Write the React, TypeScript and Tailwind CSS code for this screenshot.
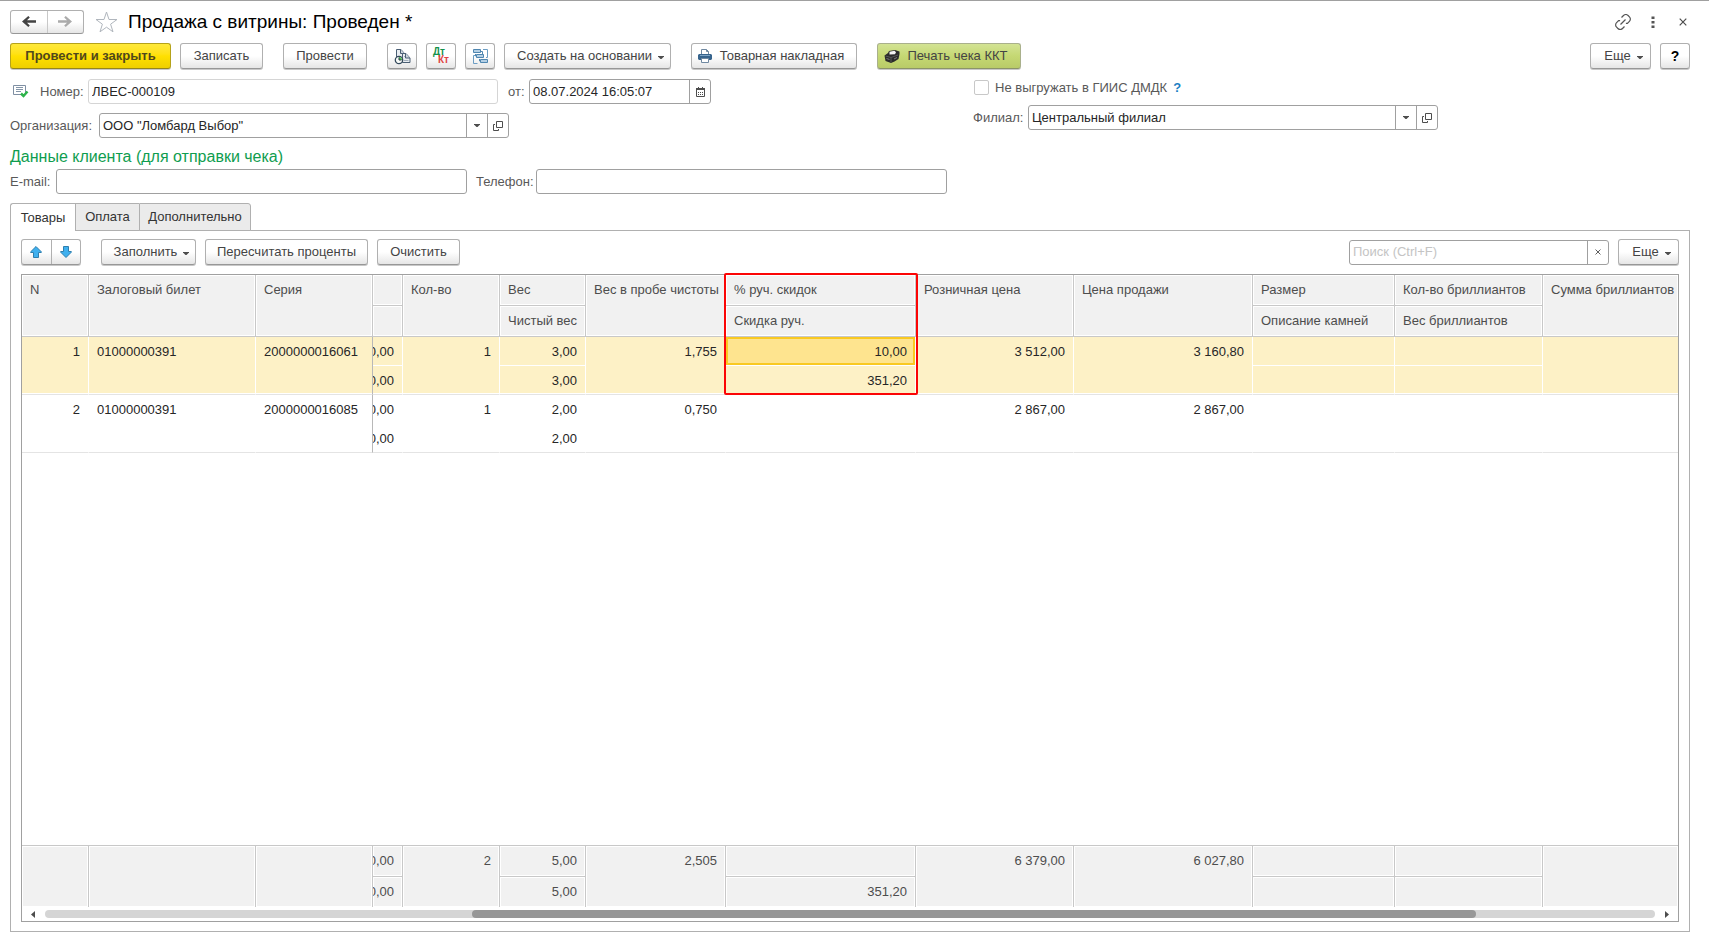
import React from "react";

type ButtonProps = React.ButtonHTMLAttributes<HTMLButtonElement> & { tone?: "plain" | "yellow" | "green" };

const tones = {
  plain: "border-[#b0b0b0] border-b-[#979797] bg-linear-to-b from-white from-50% to-[#e6e6e6] text-[#444444]",
  yellow: "border-[#b5a21a] border-b-[#94851c] bg-linear-to-b from-[#ffe93a] via-[#ffe000] to-[#eecf00] font-bold text-[#50481c]",
  green: "border-[#a9b08c] border-b-[#8b9468] bg-linear-to-b from-[#d3e394] via-[#c5d873] to-[#b9cb68] text-[#444444]",
};

function Button({ tone = "plain", className = "", children, ...rest }: ButtonProps) {
  return (
    <button
      type="button"
      className={`flex h-[26px] shrink-0 items-center justify-center rounded-[3px] border whitespace-nowrap shadow-[0_1px_0_#c8c8c8] ${tones[tone]} ${className}`}
      {...rest}
    >
      {children}
    </button>
  );
}

const Caret = () => (
  <svg width="6" height="3" viewBox="0 0 6 3" className="mt-0.5 shrink-0" aria-hidden="true">
    <path d="M0 0h6v.5L3.500 3h-1L0 .5z" fill="#4d4d4d" />
  </svg>
);

const OpenIcon = () => (
  <svg width="10" height="10" viewBox="0 0 10 10" fill="none" stroke="#4d4d4d" aria-hidden="true">
    <path d="M3.500.5h6v6h-6zM2 3.500H.5v6h5V8" />
  </svg>
);

function NavArrow({ color, flip }: { color: string; flip?: boolean }) {
  return (
    <svg width="14" height="11" viewBox="0 0 14 11" aria-hidden="true">
      <path
        d={flip ? "M0 4.300h9L6.200 1.500 7.700 0 14 5.500 7.700 11 6.200 9.500 9 6.700H0z" : "M14 4.300H5l2.800-2.800L6.300 0 0 5.500 6.300 11l1.500-1.500L5 6.700h9z"}
        fill={color}
      />
    </svg>
  );
}

function MoveArrow({ down }: { down?: boolean }) {
  return (
    <svg width="12" height="12" viewBox="0 0 12 12" aria-hidden="true">
      <path
        d={down ? "M6 11.500.700 6.200V5.500H3.500v-5h5v5h2.800v.7z" : "M6 .5.700 5.800v.7H3.500v5h5v-5h2.800v-.7z"}
        fill="#3fb0ef"
        stroke="#2f7fae"
      />
    </svg>
  );
}

const ReportIcon = () => (
  <svg width="17" height="17" viewBox="0 0 17 17" aria-hidden="true">
    <path d="M2.500 9V1.500H7l3.500 4V12h-8z" fill="#e9edf1" stroke="#4b5f74" />
    <path d="M6.500 1.500V5.500h4" fill="#cdd6de" stroke="#4b5f74" />
    <path d="M8.500 14.500V5.500h3.500l4 4.500v4.500z" fill="#e9edf1" stroke="#4b5f74" />
    <path d="M11.500 5.500V10H16" fill="#cdd6de" stroke="#4b5f74" />
    <path d="M10 8.500h1M10 12.500h4.500" stroke="#a3b0bc" />
    <circle cx="5" cy="12" r="3.700" fill="#f7faf7" stroke="#34495c" strokeWidth="1.300" />
    <path d="M5 12V9a3 3 0 0 1 3 3z" fill="#55c455" />
    <path d="M5 9.500V12h2.500" fill="none" stroke="#2b3b49" />
  </svg>
);

const StructureIcon = () => (
  <svg width="15" height="15" viewBox="0 0 15 15" aria-hidden="true">
    <path d="M10 .5h4.500v8H13M4.500 14.500h-4v-8H2" fill="none" stroke="#6c9dc3" />
    <path d="M2.500 5v2h2M6.500 10v2h1M7.500 2.500h2v3" fill="none" stroke="#4f86b0" />
    <path d="M.5.5h7v3h-7zM3.500 5.500h7v3h-7zM7.500 10.500h7v3h-7z" fill="#b4cfe4" stroke="#4f86b0" />
  </svg>
);

const PrinterIcon = () => (
  <svg width="14" height="14" viewBox="0 0 14 14" aria-hidden="true">
    <path d="M3.500 6V.5h5l2 2V6" fill="#fff" stroke="#7089a1" />
    <path d="M8.500.5v2h2" fill="none" stroke="#7089a1" />
    <path d="M1 5h12l1 1v4l-1 1H1l-1-1V6z" fill="#37648d" />
    <path d="M2 6.500h10" stroke="#7ba3c5" />
    <path d="M3.500 9.500h7v4h-7z" fill="#fff" stroke="#7089a1" />
  </svg>
);

const CashRegisterIcon = () => (
  <svg width="16" height="13" viewBox="0 0 16 13" aria-hidden="true">
    <path d="M.5 5.500 4 3l1-2 6-1 4.500 1.500V4l-1 5-4 2.500L7 13l-5.500-2z" fill="#2b2b2b" />
    <path d="m5.500 1.800 5-1 1.500 1.500-1 2-5.500.2z" fill="#f4f4f4" />
    <path d="M1.500 6 7 7.500l7-2.500M7 7.500V12" fill="none" stroke="#575757" />
    <path d="m2.500 8.500 3 1M10 9l3-1.500" stroke="#7a7a7a" />
  </svg>
);

const PostedIcon = () => (
  <svg width="16" height="13" viewBox="0 0 16 13" aria-hidden="true">
    <path d="M.5.5h12v9H.5z" fill="#fff" stroke="#7f8fa3" />
    <path d="M3 2.500h7M3 4.500h7M3 6.500h5" stroke="#8495a8" />
    <path d="m8 8.500 2.500 2.500L14.500 6.500" fill="none" stroke="#2db34a" strokeWidth="2.500" />
  </svg>
);

const CalendarIcon = () => (
  <svg width="9" height="10" viewBox="0 0 9 10" aria-hidden="true">
    <path d="M.5 1.500h8v8h-8z" fill="#fff" stroke="#4d4d4d" />
    <path d="M0 1h9v2H0zM2 0h1v1H2zM6 0h1v1H6z" fill="#4d4d4d" />
    <path d="M2 5.500h1m1 0h1m1 0h1M2 7.500h1m1 0h1m1 0h1" stroke="#4d4d4d" />
  </svg>
);

const Cross = ({ size }: { size: number }) => (
  <svg width={size} height={size} viewBox="0 0 8 8" stroke="#4d4d4d" strokeWidth="1.200" aria-hidden="true">
    <path d="m.7.7 6.600 6.600M7.300.7.7 7.300" />
  </svg>
);

const fieldBox = "flex h-[25px] items-stretch overflow-hidden rounded-[3px] border bg-white";
const fieldInput = "min-w-0 flex-1 bg-transparent px-[3px] text-[#262626] outline-none placeholder:text-[#c4c4c4]";
const fieldButton = "flex w-[21px] shrink-0 items-center justify-center border-l border-[#a0a0a0]";

function ReferenceField({ id, value, name }: { id: string; value: string; name: string }) {
  return (
    <div className={`${fieldBox} w-[410px] border-[#a0a0a0]`}>
      <input id={id} className={fieldInput} defaultValue={value} />
      <button type="button" className={fieldButton} aria-label={`Выбрать: ${name}`}>
        <svg width="6" height="3" viewBox="0 0 6 3" aria-hidden="true">
          <path d="M0 0h6v.5L3.500 3h-1L0 .5z" fill="#4d4d4d" />
        </svg>
      </button>
      <button type="button" className={fieldButton} aria-label={`Открыть: ${name}`}>
        <OpenIcon />
      </button>
    </div>
  );
}

type Column = { top: string; bottom?: string; split?: boolean; align?: "right" };

const columns: Column[] = [
  { top: "N", align: "right" },
  { top: "Залоговый билет" },
  { top: "Серия" },
  { top: "", split: true, align: "right" },
  { top: "Кол-во", align: "right" },
  { top: "Вес", bottom: "Чистый вес", split: true, align: "right" },
  { top: "Вес в пробе чистоты", align: "right" },
  { top: "% руч. скидок", bottom: "Скидка руч.", split: true, align: "right" },
  { top: "Розничная цена", align: "right" },
  { top: "Цена продажи", align: "right" },
  { top: "Размер", bottom: "Описание камней", split: true },
  { top: "Кол-во бриллиантов", bottom: "Вес бриллиантов", split: true },
  { top: "Сумма бриллиантов", align: "right" },
];

const rows = [
  {
    selected: true,
    top: ["1", "01000000391", "2000000016061", "0,00", "1", "3,00", "1,755", "10,00", "3 512,00", "3 160,80", "", "", ""],
    bottom: ["", "", "", "0,00", "", "3,00", "", "351,20", "", "", "", "", ""],
  },
  {
    selected: false,
    top: ["2", "01000000391", "2000000016085", "0,00", "1", "2,00", "0,750", "", "2 867,00", "2 867,00", "", "", ""],
    bottom: ["", "", "", "0,00", "", "2,00", "", "", "", "", "", "", ""],
  },
];

const totals = {
  top: ["", "", "", "0,00", "2", "5,00", "2,505", "", "6 379,00", "6 027,80", "", "", ""],
  bottom: ["", "", "", "0,00", "", "5,00", "", "351,20", "", "", "", "", ""],
};

const FROZEN = 2;
const DISCOUNT = 7;

function Value({ text, align, narrow }: { text: string; align?: "right"; narrow?: boolean }) {
  return (
    <div
      className={`flex h-7 items-center overflow-hidden pt-0.5 pr-2 whitespace-nowrap ${align === "right" ? "justify-end" : ""} ${narrow ? "" : "pl-2"}`}
    >
      <span className="shrink-0">{text}</span>
    </div>
  );
}

const headFill = "bg-[#f1f1f1] shadow-[inset_0_0_0_1px_#ffffff]";

function headerCell(c: Column, i: number, part: "top" | "bottom") {
  const last = i === columns.length - 1;
  return (
    <th
      key={i}
      scope="col"
      rowSpan={c.split ? 1 : 2}
      className={`border-b border-[#c8c8c8] p-0 align-top font-normal ${headFill} ${last ? "" : "border-r"}`}
    >
      <Value text={(part === "top" ? c.top : c.bottom) ?? ""} />
    </th>
  );
}

function bodyCell(row: (typeof rows)[number], i: number, part: "top" | "bottom") {
  const c = columns[i];
  const closing = part === "bottom" || !c.split;
  const focused = row.selected && part === "top" && i === DISCOUNT;
  const bottom = closing ? "border-b border-b-[#e4e4e4]" : "border-b border-b-white";
  const right = i === columns.length - 1 ? "" : i === FROZEN ? "border-r border-r-[#b8b8b8]" : "border-r border-r-white";
  const fill = focused
    ? "bg-[#fee48f] shadow-[inset_0_0_0_2px_#f9c922]"
    : row.selected
      ? closing
        ? "bg-[#fdf1c6] shadow-[inset_0_-1px_0_#ffffff]"
        : "bg-[#fdf1c6]"
      : "";
  return (
    <td key={i} rowSpan={c.split ? 1 : 2} className={`p-0 align-top ${bottom} ${right} ${fill}`}>
      <Value text={row[part][i]} align={c.align} narrow={i === 3} />
    </td>
  );
}

function footCell(i: number, part: "top" | "bottom") {
  const c = columns[i];
  return (
    <td
      key={i}
      rowSpan={c.split ? 1 : 2}
      className={`border-t border-[#c8c8c8] p-0 align-top ${headFill} ${i === columns.length - 1 ? "" : "border-r"}`}
    >
      <Value text={totals[part][i]} align={c.align} narrow={i === 3} />
    </td>
  );
}

function GoodsTable() {
  return (
    <table id="goods" className="h-full w-full table-fixed border-separate border-spacing-0 text-left">
      <colgroup>
        <col className="w-[67px]" />
        <col className="w-[167px]" />
        <col className="w-[117px]" />
        <col className="w-[30px]" />
        <col className="w-[97px]" />
        <col className="w-[86px]" />
        <col className="w-[140px]" />
        <col className="w-[190px]" />
        <col className="w-[158px]" />
        <col className="w-[179px]" />
        <col className="w-[142px]" />
        <col className="w-[148px]" />
        <col />
      </colgroup>
      <thead className="text-[#4d4d4d]">
        <tr className="h-[31px]">{columns.map((c, i) => headerCell(c, i, "top"))}</tr>
        <tr className="h-[31px]">{columns.map((c, i) => (c.split ? headerCell(c, i, "bottom") : null))}</tr>
      </thead>
      <tbody className="text-[#262626]">
        {rows.map((row, r) => (
          <React.Fragment key={r}>
            <tr className="h-[29px]">{columns.map((_, i) => bodyCell(row, i, "top"))}</tr>
            <tr className="h-[29px]">{columns.map((c, i) => (c.split ? bodyCell(row, i, "bottom") : null))}</tr>
          </React.Fragment>
        ))}
        <tr>
          <td colSpan={columns.length} className="p-0" />
        </tr>
      </tbody>
      <tfoot className="text-[#4d4d4d]">
        <tr className="h-[31px]">{columns.map((_, i) => footCell(i, "top"))}</tr>
        <tr className="h-[31px]">{columns.map((c, i) => (c.split ? footCell(i, "bottom") : null))}</tr>
      </tfoot>
    </table>
  );
}

export default function App() {
  return (
    <main className="flex min-h-screen flex-col border-t border-[#a0a0a0] bg-white pt-2 pr-[19px] pb-[7px] pl-[10px] font-['Liberation_Sans',Arial,sans-serif] text-[13px] leading-4 text-[#595959]">
      <header className="flex h-[25px] items-center">
        <div className="flex h-6 w-[74px] overflow-hidden rounded-[3px] border border-[#b0b0b0] border-b-[#979797] bg-linear-to-b from-white from-50% to-[#e6e6e6]">
          <button type="button" aria-label="Назад" className="flex flex-1 items-center justify-center border-r border-[#c8c8c8]">
            <NavArrow color="#444444" />
          </button>
          <button type="button" aria-label="Вперед" className="flex flex-1 items-center justify-center">
            <NavArrow color="#ababab" flip />
          </button>
        </div>
        <button type="button" aria-label="Добавить в избранное" className="ml-[11px]">
          <svg width="23" height="22" viewBox="0 0 23 22" fill="none" stroke="#b0b6bd" aria-hidden="true">
            <path d="m11.500 1 2.500 7.500h8l-6.400 4.700 2.400 7.600-6.500-4.600L5 20.800l2.400-7.600L1 8.500h8z" />
          </svg>
        </button>
        <h1 className="ml-[10px] text-[19px] leading-6 text-black">Продажа с витрины: Проведен *</h1>
        <div className="mr-[3px] ml-auto flex items-center">
          <button type="button" aria-label="Получить ссылку">
            <svg width="16" height="16" viewBox="0 0 16 16" fill="none" stroke="#555555" strokeWidth="1.200" aria-hidden="true">
              <path d="m6.500 3.500 2-2a3.200 3.200 0 0 1 4.600 0l1.300 1.300a3.200 3.200 0 0 1 0 4.600l-2 2h-1.500M9.500 12.500l-2 2a3.200 3.200 0 0 1-4.600 0l-1.300-1.300a3.200 3.200 0 0 1 0-4.600l2-2h1.500M5.500 10.500l5-5" />
            </svg>
          </button>
          <button type="button" aria-label="Дополнительное меню" className="ml-5">
            <svg width="4" height="12" viewBox="0 0 4 12" fill="#555555" aria-hidden="true">
              <path d="M.5.5h3v2.500h-3zM.5 5h3v2.500h-3zM.5 9.500h3V12h-3z" />
            </svg>
          </button>
          <button type="button" aria-label="Закрыть" className="ml-6">
            <Cross size={8} />
          </button>
        </div>
      </header>

      <div className="mt-[9px] flex items-center gap-[9px]">
        <Button tone="yellow" className="w-[161px]">Провести и закрыть</Button>
        <Button className="w-[83px]">Записать</Button>
        <Button className="ml-[11px] w-[84px]">Провести</Button>
        <Button className="ml-[11px] w-[30px]" aria-label="Отчет"><ReportIcon /></Button>
        <Button className="w-[30px]" aria-label="Показать проводки">
          <span className="flex flex-col text-left text-[10px] leading-[8px] font-bold" aria-hidden="true">
            <span className="text-[#14924b]">Дт</span>
            <span className="pl-[5px] text-[#df4545]">Кт</span>
          </span>
        </Button>
        <Button className="w-[30px]" aria-label="Структура подчиненности"><StructureIcon /></Button>
        <Button className="w-[167px] gap-[6px] pl-[6px]">Создать на основании <Caret /></Button>
        <Button className="ml-[11px] w-[166px] gap-2 pr-[6px]"><PrinterIcon />Товарная накладная</Button>
        <Button tone="green" className="ml-[11px] w-[144px] gap-[7px] pr-[6px]"><CashRegisterIcon />Печать чека ККТ</Button>
        <Button className="ml-auto w-[61px] gap-[6px] pl-[6px]">Еще <Caret /></Button>
        <Button className="w-[30px] text-[14px] font-bold text-black" aria-label="Справка">?</Button>
      </div>

      <div className="mt-[10px] grid grid-cols-[963px_1fr]">
        <div className="flex flex-col gap-[9px]">
          <div className="flex items-center">
            <span className="ml-[3px]"><PostedIcon /></span>
            <label htmlFor="number" className="ml-[11px] w-12">Номер:</label>
            <div className={`${fieldBox} w-[410px] border-[#d5d5d5]`}>
              <input id="number" className={fieldInput} defaultValue="ЛВЕС-000109" />
            </div>
            <label htmlFor="date" className="ml-[10px] w-[21px]">от:</label>
            <div className={`${fieldBox} w-[182px] border-[#a0a0a0]`}>
              <input id="date" className={fieldInput} defaultValue="08.07.2024 16:05:07" />
              <button type="button" className={fieldButton} aria-label="Выбрать дату"><CalendarIcon /></button>
            </div>
          </div>
          <div className="flex items-center">
            <label htmlFor="org" className="w-[89px]">Организация:</label>
            <ReferenceField id="org" value={'ООО "Ломбард Выбор"'} name="Организация" />
          </div>
        </div>
        <div className="flex flex-col gap-[9px]">
          <div className="flex h-[17px] items-center">
            <input
              id="giis"
              type="checkbox"
              className="ml-px h-[15px] w-[15px] appearance-none rounded-[2px] border border-[#c8c8c8] bg-white checked:bg-[#595959]"
            />
            <label htmlFor="giis" className="ml-[6px]">Не выгружать в ГИИС ДМДК</label>
            <button type="button" className="ml-[6px] font-bold text-[#1a7fc4]" aria-label="Подсказка">?</button>
          </div>
          <div className="flex items-center">
            <label htmlFor="branch" className="w-[55px]">Филиал:</label>
            <ReferenceField id="branch" value="Центральный филиал" name="Филиал" />
          </div>
        </div>
      </div>

      <h2 className="mt-2 text-[16px] leading-[22px] text-[#0f9d4f]">Данные клиента (для отправки чека)</h2>
      <div className="mt-px flex items-center">
        <label htmlFor="email" className="w-[46px]">E-mail:</label>
        <div className={`${fieldBox} w-[411px] border-[#a0a0a0]`}>
          <input id="email" type="email" className={fieldInput} />
        </div>
        <label htmlFor="phone" className="ml-[9px] w-[60px]">Телефон:</label>
        <div className={`${fieldBox} w-[411px] border-[#a0a0a0]`}>
          <input id="phone" type="tel" className={fieldInput} />
        </div>
      </div>

      <div role="tablist" className="relative z-10 mt-[9px] -mb-px flex h-7 text-[#333333]">
        <button type="button" role="tab" aria-selected="true" className="w-[65px] rounded-tl-[3px] border border-r-0 border-b-0 border-[#b0b0b0] bg-white">
          Товары
        </button>
        <button type="button" role="tab" aria-selected="false" className="w-16 border border-r-0 border-[#b0b0b0] bg-[#ebebeb]">
          Оплата
        </button>
        <button type="button" role="tab" aria-selected="false" className="w-[112px] rounded-tr-[3px] border border-[#b0b0b0] bg-[#ebebeb]">
          Дополнительно
        </button>
      </div>

      <section className="flex flex-1 flex-col border border-[#b0b0b0] px-[10px] pt-2 pb-[9px]">
        <div className="flex items-center gap-[9px]">
          <div className="flex h-[26px] w-[60px] overflow-hidden rounded-[3px] border border-[#b0b0b0] border-b-[#979797] bg-linear-to-b from-white from-50% to-[#e6e6e6] shadow-[0_1px_0_#c8c8c8]">
            <button type="button" aria-label="Переместить вверх" className="flex flex-1 items-center justify-center border-r border-[#b0b0b0]">
              <MoveArrow />
            </button>
            <button type="button" aria-label="Переместить вниз" className="flex flex-1 items-center justify-center">
              <MoveArrow down />
            </button>
          </div>
          <Button className="ml-[11px] w-[95px] gap-[6px] pl-[6px]">Заполнить <Caret /></Button>
          <Button className="w-[163px]">Пересчитать проценты</Button>
          <Button className="w-[83px]">Очистить</Button>
          <div className={`${fieldBox} ml-auto w-[260px] border-[#a0a0a0]`}>
            <input aria-label="Поиск" className={fieldInput} placeholder="Поиск (Ctrl+F)" />
            <button type="button" className={fieldButton} aria-label="Очистить поиск"><Cross size={6} /></button>
          </div>
          <Button className="w-[61px] gap-[6px] pl-[6px]">Еще <Caret /></Button>
        </div>

        <div className="relative mt-[9px] flex flex-1 flex-col border border-[#a0a0a0]">
          <div className="grid flex-1">
            <GoodsTable />
          </div>
          <div className="flex h-[14px] items-center gap-[10px] px-[9px]">
            <svg width="4" height="7" viewBox="0 0 4 7" aria-hidden="true"><path d="M4 0v7L0 3.500z" fill="#4d4d4d" /></svg>
            <div role="scrollbar" aria-controls="goods" aria-valuenow={71} aria-orientation="horizontal" className="h-2 flex-1 rounded-full bg-[#d5d5d5]">
              <div className="ml-[26.500%] h-full w-[62.400%] rounded-full bg-[#979797]" />
            </div>
            <svg width="4" height="7" viewBox="0 0 4 7" aria-hidden="true"><path d="M0 0v7l4-3.500z" fill="#4d4d4d" /></svg>
          </div>
          <div className="pointer-events-none absolute -top-[2px] left-[702px] h-[122px] w-[194px] rounded-[2px] border-2 border-[#fb0505]" />
        </div>
      </section>
    </main>
  );
}
